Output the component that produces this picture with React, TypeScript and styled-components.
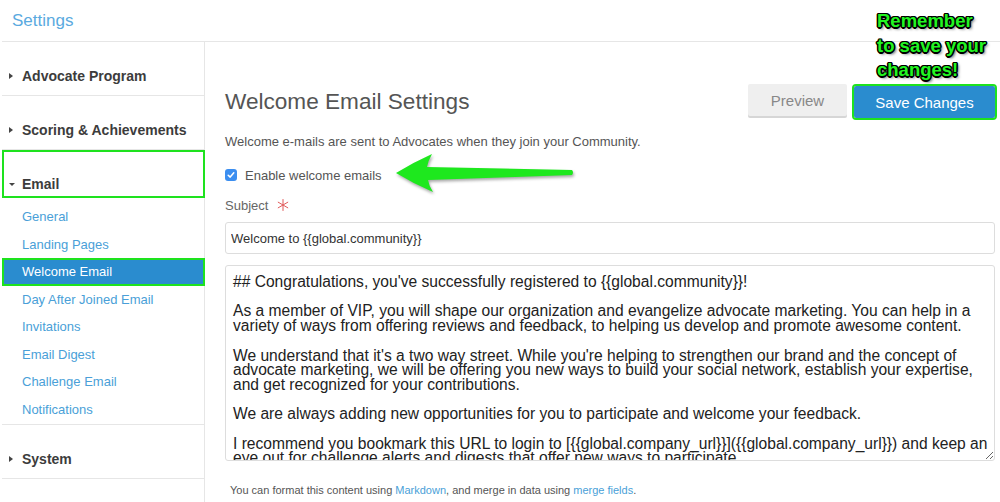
import React from "react";
import styled, { createGlobalStyle } from "styled-components";

const GlobalStyle = createGlobalStyle`
  html, body { margin: 0; padding: 0; background: #fff; height: 502px; overflow: hidden; }
  body { font-family: "Liberation Sans", Arial, Helvetica, sans-serif; color: #333; }
  * { box-sizing: border-box; }
`;

const ANNOT = "#1ee21e";
const LINK = "#4a9fd8";

const Page = styled.div`
  position: relative;
  width: 1000px;
  height: 502px;
  padding-left: 2px;
  display: flex;
  flex-direction: column;
`;

const Header = styled.header`
  height: 42px;
  flex: none;
  border-bottom: 1px solid #e6e6e6;
  display: flex;
  align-items: center;
  padding-left: 10px;
`;

const Brand = styled.div`
  font-size: 17px;
  color: #5aaae0;
  line-height: 20px;
`;

const Body = styled.div`
  flex: 1;
  display: flex;
  min-height: 0;
`;

const Sidebar = styled.nav`
  width: 203px;
  flex: none;
  border-right: 1px solid #e6e6e6;
  display: flex;
  flex-direction: column;
`;

const Section = styled.div`
  border-bottom: 1px solid #e6e6e6;
`;

const SectionHeader = styled.div<{ $outlined?: boolean }>`
  display: flex;
  align-items: flex-start;
  height: ${(p) => (p.$outlined ? 48 : 53)}px;
  padding: ${(p) => (p.$outlined ? "22px 0 0 5px" : "24px 0 0 7px")};
  ${(p) => (p.$outlined ? `border: 2px solid ${ANNOT}; margin-right: -1px;` : ``)}
`;

const HeaderLabel = styled.span`
  font-size: 14px;
  font-weight: bold;
  color: #3c3c3c;
  line-height: 20px;
  display: flex;
  align-items: center;
`;

const Caret = styled.span<{ $open?: boolean }>`
  display: inline-block;
  width: 0;
  height: 0;
  ${(p) =>
    p.$open
      ? `border-left: 3.5px solid transparent; border-right: 3.5px solid transparent; border-top: 3.5px solid #444; margin-right: 7px;`
      : `border-top: 3px solid transparent; border-bottom: 3px solid transparent; border-left: 4px solid #444; margin-right: 9px;`}
`;

const SubList = styled.ul`
  list-style: none;
  margin: 0;
  padding: 5px 0 1px 0;
`;

const SubItem = styled.li<{ $active?: boolean }>`
  height: 27.5px;
  display: flex;
  align-items: center;
  font-size: 13px;
  padding-left: 20px;
  color: ${LINK};
  ${(p) =>
    p.$active
      ? `background: #2a8ccf; color: #fff; border: 2px solid ${ANNOT}; padding-left: 18px; margin-right: -1px;`
      : ``}
`;

const Main = styled.main`
  flex: 1;
  padding: 42px 5px 0 20px;
  display: flex;
  flex-direction: column;
`;

const TitleRow = styled.div`
  display: flex;
  align-items: flex-start;
  height: 36px;
`;

const Title = styled.h1`
  margin: 0;
  flex: 1;
  font-size: 22.6px;
  font-weight: normal;
  color: #555;
  line-height: 36px;
`;

const Button = styled.button<{ $primary?: boolean }>`
  font-family: inherit;
  font-size: 15px;
  border: none;
  border-radius: 2px;
  cursor: pointer;
  height: 32px;
  ${(p) =>
    p.$primary
      ? `width: 141px; margin: 2px 0 0 7px; background: #2a8ccf; color: #fff; outline: 2px solid ${ANNOT};`
      : `width: 99px; background: #efefef; color: #888; box-shadow: 0 2px 0 #d6d6d6;`}
`;

const Description = styled.p`
  margin: 13px 0 0;
  font-size: 13px;
  line-height: 18px;
  color: #555;
`;

const CheckRow = styled.label`
  margin-top: 15px;
  display: flex;
  align-items: center;
  height: 18px;
  font-size: 13px;
  color: #555;
`;

const CheckBox = styled.span`
  width: 12px;
  height: 12px;
  border-radius: 3px;
  background: #3b8ef0;
  display: inline-flex;
  align-items: center;
  justify-content: center;
  margin: 0 8px 0 0;
`;

const FieldLabel = styled.div`
  margin-top: 12px;
  height: 18px;
  display: flex;
  align-items: center;
  font-size: 13px;
  color: #666;
  gap: 9px;
`;

const TextInput = styled.input`
  margin-top: 8px;
  height: 32px;
  width: 100%;
  border: 1px solid #ddd;
  border-radius: 3px;
  padding: 0 5px;
  font-family: inherit;
  font-size: 13px;
  color: #333;
  outline: none;
`;

const TextArea = styled.textarea`
  margin-top: 11px;
  height: 196px;
  width: 100%;
  border: 1px solid #ddd;
  border-radius: 3px;
  padding: 9px 1px 0 7px;
  font-family: "Liberation Sans", Arial, Helvetica, sans-serif;
  font-size: 15.6px;
  line-height: 14.7px;
  color: #222;
  overflow: hidden;
  resize: vertical;
  outline: none;
  white-space: pre;
`;

const Footnote = styled.p`
  margin: 22px 0 0 5px;
  font-size: 11px;
  line-height: 14px;
  color: #555;
`;

const Link = styled.a`
  color: ${LINK};
  text-decoration: none;
`;

const Annotation = styled.div`
  position: absolute;
  left: 877px;
  top: 9px;
  font-size: 18.5px;
  font-weight: bold;
  line-height: 24.5px;
  color: #22f522;
  text-shadow: -1px -1px 0 #000, 1px -1px 0 #000, -1px 1px 0 #000, 1px 1px 0 #000,
    0 1.5px 0 #000, 1.5px 0 0 #000, -1.5px 0 0 #000, 0 -1.5px 0 #000,
    2px 2px 3px rgba(0, 0, 0, 0.7);
`;

const ArrowSvg = styled.svg`
  position: absolute;
  left: 390px;
  top: 148px;
  overflow: visible;
  filter: drop-shadow(1px 2px 1.5px rgba(0, 0, 0, 0.35));
`;

const bodyText = `## Congratulations, you've successfully registered to {{global.community}}!

As a member of VIP, you will shape our organization and evangelize advocate marketing. You can help in a
variety of ways from offering reviews and feedback, to helping us develop and promote awesome content.

We understand that it's a two way street. While you're helping to strengthen our brand and the concept of
advocate marketing, we will be offering you new ways to build your social network, establish your expertise,
and get recognized for your contributions.

We are always adding new opportunities for you to participate and welcome your feedback.

I recommend you bookmark this URL to login to [{{global.company_url}}]({{global.company_url}}) and keep an
eye out for challenge alerts and digests that offer new ways to participate.`;

const subItems = [
  "General",
  "Landing Pages",
  "Welcome Email",
  "Day After Joined Email",
  "Invitations",
  "Email Digest",
  "Challenge Email",
  "Notifications",
];

export default function App() {
  return (
    <Page>
      <GlobalStyle />
      <Header>
        <Brand>Settings</Brand>
      </Header>
      <Body>
        <Sidebar>
          <Section>
            <SectionHeader>
              <HeaderLabel>
                <Caret />
                Advocate Program
              </HeaderLabel>
            </SectionHeader>
          </Section>
          <Section>
            <SectionHeader>
              <HeaderLabel>
                <Caret />
                Scoring &amp; Achievements
              </HeaderLabel>
            </SectionHeader>
          </Section>
          <Section>
            <SectionHeader $outlined>
              <HeaderLabel>
                <Caret $open />
                Email
              </HeaderLabel>
            </SectionHeader>
            <SubList>
              {subItems.map((s) => (
                <SubItem key={s} $active={s === "Welcome Email"}>
                  {s}
                </SubItem>
              ))}
            </SubList>
          </Section>
          <Section>
            <SectionHeader>
              <HeaderLabel>
                <Caret />
                System
              </HeaderLabel>
            </SectionHeader>
          </Section>
        </Sidebar>
        <Main>
          <TitleRow>
            <Title>Welcome Email Settings</Title>
            <Button>Preview</Button>
            <Button $primary>Save Changes</Button>
          </TitleRow>
          <Description>
            Welcome e-mails are sent to Advocates when they join your Community.
          </Description>
          <CheckRow>
            <CheckBox>
              <svg width="8" height="8" viewBox="0 0 8 8">
                <path d="M1.2 4.2 L3.2 6.1 L6.8 1.8" fill="none" stroke="#fff" strokeWidth="1.5" strokeLinecap="round" strokeLinejoin="round" />
              </svg>
            </CheckBox>
            Enable welcome emails
          </CheckRow>
          <FieldLabel>
            Subject
            <svg width="12" height="12" viewBox="0 0 12 12">
              <g stroke="#e05a5a" strokeWidth="1" strokeLinecap="round">
                <line x1="6" y1="0.5" x2="6" y2="11.5" />
                <line x1="1.2" y1="3.2" x2="10.8" y2="8.8" />
                <line x1="1.2" y1="8.8" x2="10.8" y2="3.2" />
              </g>
            </svg>
          </FieldLabel>
          <TextInput defaultValue="Welcome to {{global.community}}" />
          <TextArea defaultValue={bodyText} wrap="off" />
          <Footnote>
            You can format this content using <Link>Markdown</Link>, and merge in data using{" "}
            <Link>merge fields</Link>.
          </Footnote>
        </Main>
      </Body>
      <Annotation>
        Remember
        <br />
        to save your
        <br />
        changes!
      </Annotation>
      <ArrowSvg width="190" height="50" viewBox="390 148 190 50">
        <path
          d="M396 173 Q414 162 432 154 Q428 161 427 167 L572 170 Q574 172.5 572 175 L428 180 Q429 186 433 192 Q414 184 396 173 Z"
          fill="#1ee81e"
        />
      </ArrowSvg>
    </Page>
  );
}
